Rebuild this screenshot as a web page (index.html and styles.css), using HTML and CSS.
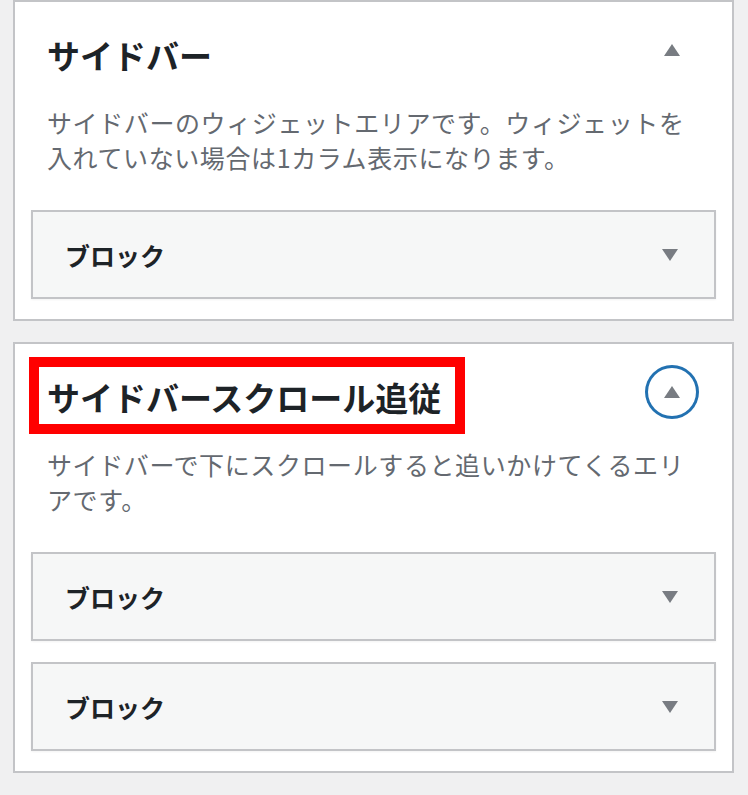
FILE: index.html
```html
<!DOCTYPE html>
<html lang="ja">
<head>
<meta charset="utf-8">
<title>サイドバー</title>
<link rel="stylesheet" href="styles.css">
</head>
<body>
<section class="panel">
  <div class="panel-header">
    <h2 class="panel-title">サイドバー</h2>
    <button class="toggle" type="button" aria-label="閉じる">
      <svg width="16" height="12" viewBox="0 0 16 12"><polygon points="8,0 16,12 0,12" fill="#787c82"/></svg>
    </button>
  </div>
  <p class="panel-desc">サイドバーのウィジェットエリアです。ウィジェットを入れていない場合は1カラム表示になります。</p>
  <div class="blocks">
    <div class="block">
      <span class="block-name">ブロック</span>
      <svg class="caret" width="16" height="12" viewBox="0 0 16 12"><polygon points="0,0 16,0 8,12" fill="#787c82"/></svg>
    </div>
  </div>
</section>

<section class="panel">
  <div class="panel-header">
    <h2 class="panel-title"><span class="highlight">サイドバースクロール追従</span></h2>
    <button class="toggle is-focused" type="button" aria-label="閉じる">
      <svg width="16" height="12" viewBox="0 0 16 12"><polygon points="8,0 16,12 0,12" fill="#787c82"/></svg>
    </button>
  </div>
  <p class="panel-desc">サイドバーで下にスクロールすると追いかけてくるエリアです。</p>
  <div class="blocks">
    <div class="block">
      <span class="block-name">ブロック</span>
      <svg class="caret" width="16" height="12" viewBox="0 0 16 12"><polygon points="0,0 16,0 8,12" fill="#787c82"/></svg>
    </div>
    <div class="block">
      <span class="block-name">ブロック</span>
      <svg class="caret" width="16" height="12" viewBox="0 0 16 12"><polygon points="0,0 16,0 8,12" fill="#787c82"/></svg>
    </div>
  </div>
</section>
</body>
</html>
```

FILE: styles.css
```css
html, body {
  margin: 0;
  padding: 0;
}

body {
  background: #f0f0f1;
  font-family: "Noto Sans CJK JP", "Noto Sans", sans-serif;
  color: #1d2327;
  width: 748px;
}

.panel {
  background: #fff;
  border: 2px solid #c3c4c7;
  margin: 0 14px 21px 13px;
  padding: 0 16px 20px 16px;
  box-sizing: border-box;
}

.panel-header {
  display: flex;
  align-items: center;
  justify-content: space-between;
  padding: 31px 20px 0 16px;
  height: 75px;
  box-sizing: border-box;
}

.panel-title {
  margin: 0;
  font-size: 33px;
  line-height: 44px;
  font-weight: 700;
  letter-spacing: 0;
  color: #1d2327;
}

.highlight {
  position: relative;
  display: inline-block;
}

.highlight::after {
  content: "";
  position: absolute;
  top: -18px;
  bottom: -15px;
  left: -18px;
  right: -24px;
  border: 10px solid #ff0000;
  pointer-events: none;
}

.toggle {
  width: 48px;
  height: 48px;
  margin-top: -10px;
  border: 0;
  padding: 0;
  background: transparent;
  border-radius: 50%;
  display: flex;
  align-items: center;
  justify-content: center;
}

.toggle.is-focused {
  box-shadow: 0 0 0 3px #2271b1;
}

.panel-desc {
  margin: 28px 16px 35px 16px;
  font-size: 25px;
  line-height: 35px;
  letter-spacing: 0.6px;
  color: #646970;
}

.blocks {
  display: flex;
  flex-direction: column;
  gap: 21px;
}

.block {
  height: 89px;
  box-sizing: border-box;
  background: #f6f7f7;
  border: 2px solid #c3c4c7;
  box-shadow: 0 1px 2px rgba(0, 0, 0, 0.05);
  display: flex;
  align-items: center;
  justify-content: space-between;
  padding: 0 36px 0 32px;
}

.block-name {
  font-size: 25px;
  font-weight: 700;
  letter-spacing: 0;
  color: #1d2327;
}

.caret {
  display: block;
}
```
